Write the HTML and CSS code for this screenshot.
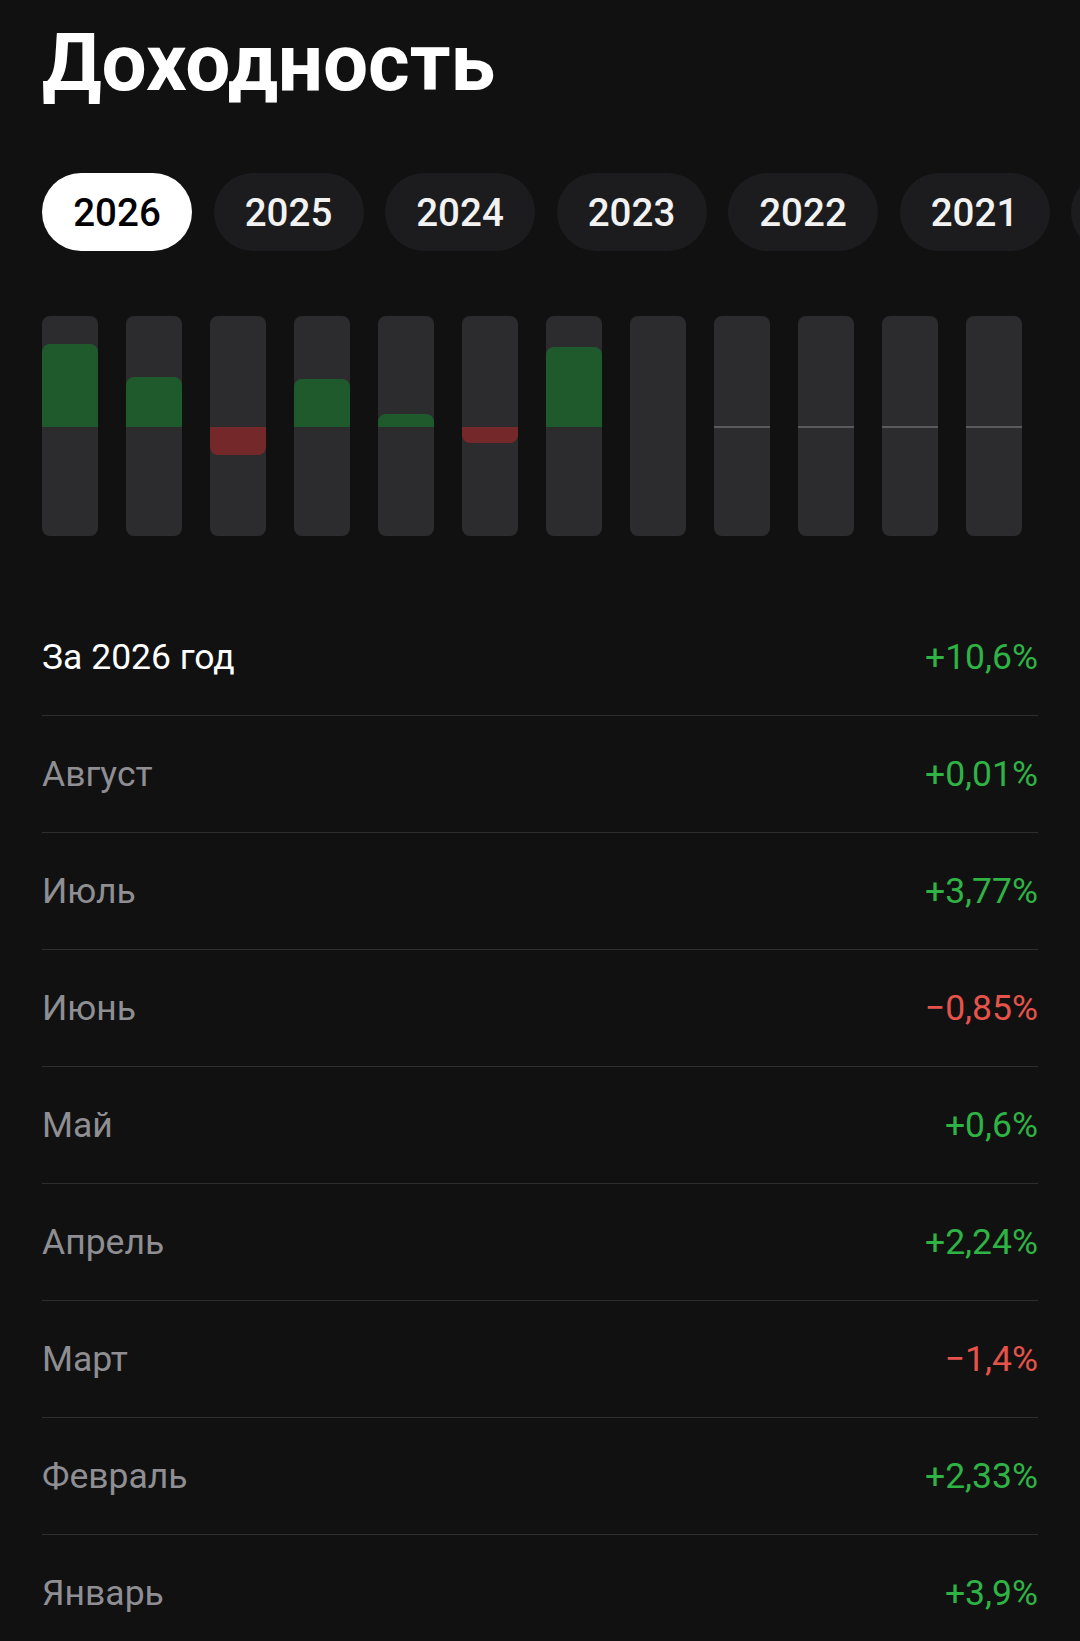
FILE: index.html
```html
<!DOCTYPE html>
<html lang="ru">
<head>
  <meta charset="UTF-8" />
  <meta name="viewport" content="width=device-width, initial-scale=1.0"/>
  <title>Доходность</title>
  <link rel="stylesheet" href="styles.css">
</head>
<body>
  <div class="page">
    <h1 class="title">Доходность</h1>

    <div class="years">
      <div class="year active">2026</div>
      <div class="year">2025</div>
      <div class="year">2024</div>
      <div class="year">2023</div>
      <div class="year">2022</div>
      <div class="year">2021</div>
      <div class="year">2020</div>
    </div>

    <div class="chart">
      <div class="bar"><div class="half top"><div class="fill up" style="height: 83px"></div></div><div class="half bottom"></div></div>
      <div class="bar"><div class="half top"><div class="fill up" style="height: 50px"></div></div><div class="half bottom"></div></div>
      <div class="bar"><div class="half top"></div><div class="half bottom"><div class="fill down" style="height: 28px"></div></div></div>
      <div class="bar"><div class="half top"><div class="fill up" style="height: 48px"></div></div><div class="half bottom"></div></div>
      <div class="bar"><div class="half top"><div class="fill up" style="height: 13px"></div></div><div class="half bottom"></div></div>
      <div class="bar"><div class="half top"></div><div class="half bottom"><div class="fill down" style="height: 16px"></div></div></div>
      <div class="bar"><div class="half top"><div class="fill up" style="height: 80px"></div></div><div class="half bottom"></div></div>
      <div class="bar"><div class="half top"></div><div class="half bottom"></div></div>
      <div class="bar empty"><div class="half top"></div><div class="half bottom"></div></div>
      <div class="bar empty"><div class="half top"></div><div class="half bottom"></div></div>
      <div class="bar empty"><div class="half top"></div><div class="half bottom"></div></div>
      <div class="bar empty"><div class="half top"></div><div class="half bottom"></div></div>
    </div>

    <ul class="rows">
      <li class="row total"><span class="label">За 2026 год</span><span class="value plus">+10,6%</span></li>
      <li class="row"><span class="label">Август</span><span class="value plus">+0,01%</span></li>
      <li class="row"><span class="label">Июль</span><span class="value plus">+3,77%</span></li>
      <li class="row"><span class="label">Июнь</span><span class="value minus">−0,85%</span></li>
      <li class="row"><span class="label">Май</span><span class="value plus">+0,6%</span></li>
      <li class="row"><span class="label">Апрель</span><span class="value plus">+2,24%</span></li>
      <li class="row"><span class="label">Март</span><span class="value minus">−1,4%</span></li>
      <li class="row"><span class="label">Февраль</span><span class="value plus">+2,33%</span></li>
      <li class="row"><span class="label">Январь</span><span class="value plus">+3,9%</span></li>
    </ul>
  </div>
</body>
</html>
```

FILE: styles.css
```css
body {
  font-family: Roboto, "Noto Sans", sans-serif;
  margin: 0;
  padding: 0;
  background-color: #111111;
  color: white;
  overflow: hidden;
}
.page {
  padding: 15px 42px 0 42px;
}
.title {
  margin: 0;
  font-size: 80px;
  font-weight: 700;
  line-height: 96px;
}
.years {
  display: flex;
  gap: 21.5px;
  margin-top: 62px;
  margin-right: -42px;
  overflow: hidden;
}
.year {
  flex: 0 0 150px;
  height: 78px;
  border-radius: 40px;
  background-color: #1c1c1e;
  display: flex;
  justify-content: center;
  align-items: center;
  font-size: 38.5px;
  font-weight: 500;
  color: #f2f2f2;
}
.year.active {
  background-color: white;
  color: black;
}
.chart {
  display: flex;
  gap: 28px;
  margin-top: 65px;
}
.bar {
  width: 56px;
  height: 220px;
  border-radius: 8px;
  background-color: #2c2c2e;
  overflow: hidden;
  display: flex;
  flex-direction: column;
}
.half {
  display: flex;
}
.half.top {
  align-items: flex-end;
  height: 111px;
}
.half.bottom {
  align-items: flex-start;
  height: 109px;
}
.bar.empty .half.bottom {
  border-top: 2px solid #5a5a5c;
}
.fill {
  width: 100%;
}
.fill.up {
  background-color: #1f5a2d;
  border-radius: 8px 8px 0 0;
}
.fill.down {
  background-color: #74282a;
  border-radius: 0 0 8px 8px;
}
.rows {
  list-style-type: none;
  margin: 63px 0 0;
  padding: 0;
}
.row {
  display: flex;
  justify-content: space-between;
  align-items: center;
  height: 116px;
  border-bottom: 1px solid #2e2e30;
  font-size: 35.5px;
}
.row .label {
  color: #8e8e93;
}
.row.total .label {
  color: white;
}
.value.plus {
  color: #2fb344;
}
.value.minus {
  color: #e5534b;
}
```
